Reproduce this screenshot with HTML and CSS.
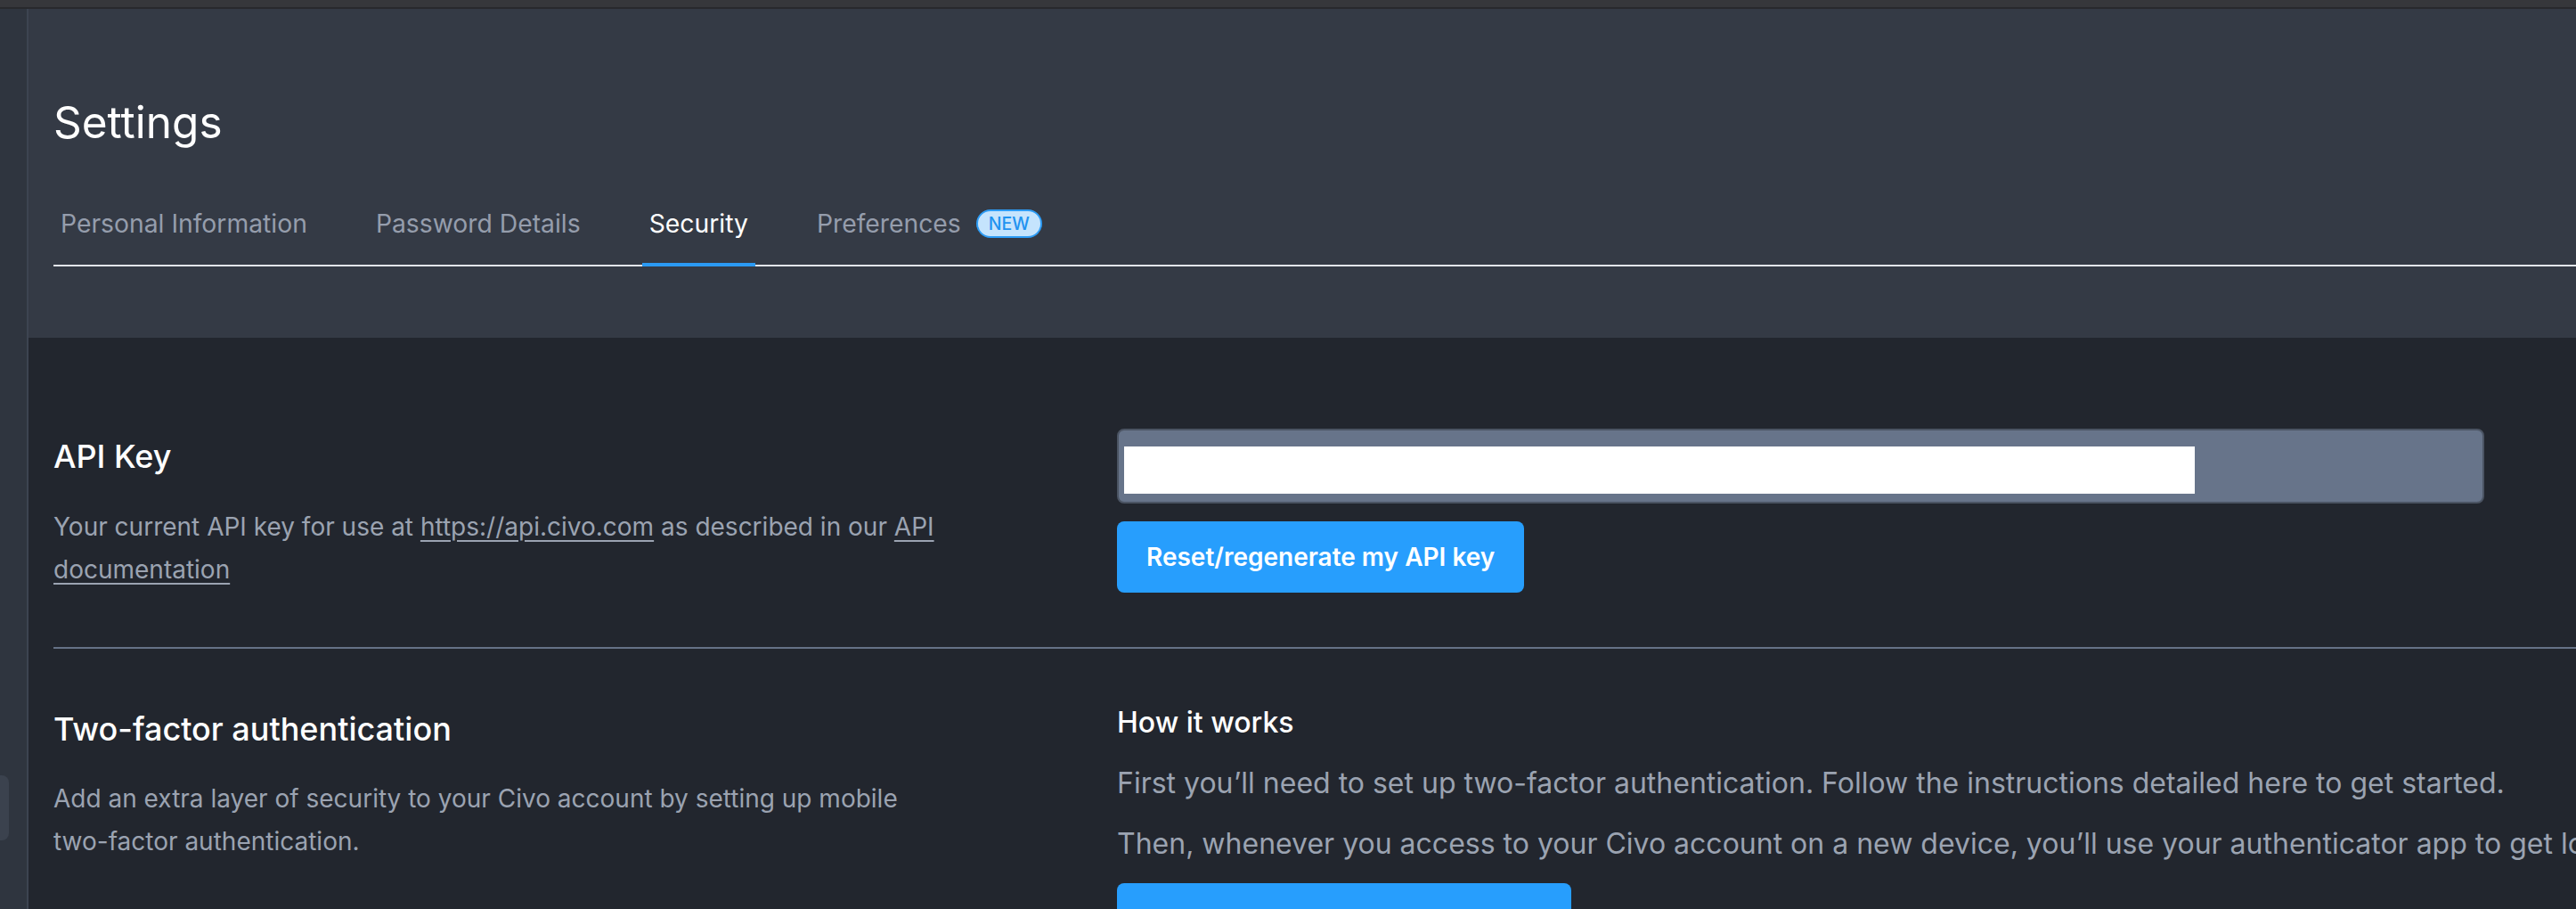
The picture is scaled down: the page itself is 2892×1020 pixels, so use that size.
FILE: index.html
```html
<!DOCTYPE html>
<html lang="en">
<head>
<meta charset="utf-8">
<title>Settings</title>
<link rel="stylesheet" href="styles.css">
</head>
<body>
<div class="topstrip"></div>
<div class="app">
  <aside class="sidebar">
    <div class="sidebar-tab"></div>
  </aside>
  <main class="main">
    <header class="page-header">
      <h1 class="page-title">Settings</h1>
      <nav class="tabs">
        <a class="tab">Personal Information</a>
        <a class="tab">Password Details</a>
        <a class="tab tab-active">Security</a>
        <a class="tab">Preferences <span class="badge">NEW</span></a>
      </nav>
    </header>
    <div class="content">
      <section class="row row-first">
        <div class="col-left">
          <h2 class="row-title">API Key</h2>
          <p class="row-desc">Your current API key for use at <a class="link">https://api.civo.com</a> as described in our <a class="link">API documentation</a></p>
        </div>
        <div class="col-right">
          <div class="key-field"><div class="key-mask"></div></div>
          <button class="btn">Reset/regenerate my API key</button>
        </div>
      </section>
      <section class="row row-second">
        <div class="col-left">
          <h2 class="row-title">Two-factor authentication</h2>
          <p class="row-desc">Add an extra layer of security to your Civo account by setting up mobile <span class="nowrap">two-factor</span> authentication.</p>
        </div>
        <div class="col-right">
          <h3 class="how-title">How it works</h3>
          <p class="how-text">First you’ll need to set up two-factor authentication. Follow the instructions detailed here to get started.</p>
          <p class="how-text">Then, whenever you access to your Civo account on a new device, you’ll use your authenticator app to get login codes.</p>
          <button class="btn btn-wide">Set up two-factor auth</button>
        </div>
      </section>
    </div>
  </main>
</div>
</body>
</html>
```

FILE: styles.css
```css
html, body {
  margin: 0;
  padding: 0;
  overflow: hidden;
  background: #22262e;
  font-family: "Inter", "Noto Sans", sans-serif;
}
body {
  width: 2892px;
  height: 1020px;
}
.topstrip {
  height: 8px;
  background: #36373b;
  border-bottom: 2px solid #28292d;
}
.app {
  display: flex;
  height: 1010px;
}
.sidebar {
  width: 30px;
  flex: 0 0 30px;
  background: #2f353f;
  border-right: 2px solid #3d4451;
  display: flex;
  flex-direction: column;
}
.sidebar-tab {
  margin-top: 860px;
  width: 10px;
  height: 73px;
  background: #3b424e;
  border-radius: 0 8px 8px 0;
}
.main {
  flex: 1 0 auto;
  width: 3400px;
  min-width: 0;
}
.page-header {
  background: #343a45;
  padding: 98px 0 80px 28px;
}
.page-title {
  margin: 0;
  font-size: 49.5px;
  line-height: 58px;
  font-weight: 400;
  color: #ffffff;
}
.tabs {
  margin-top: 65px;
  display: flex;
  gap: 61px;
  border-bottom: 2px solid #e2e5ea;
}
.tab {
  display: flex;
  align-items: center;
  padding: 0 8px 24px;
  margin-bottom: -2px;
  border-bottom: 4px solid transparent;
  font-size: 28.3px;
  line-height: 40px;
  color: #959dac;
  white-space: nowrap;
}
.tab-active {
  color: #ffffff;
  border-bottom-color: #2b9af3;
}
.badge {
  margin-left: 17px;
  height: 28px;
  padding: 0 12px;
  border: 2px solid #2d9cf5;
  border-radius: 16px;
  background: #c5e4fd;
  color: #1f93f0;
  font-size: 19.5px;
  font-weight: 500;
  line-height: 28px;
}
.content {
  padding-left: 28px;
}
.row {
  display: grid;
  grid-template-columns: 1194px 2000px;
  align-items: start;
}
.row-first {
  padding: 102px 0 61px;
  border-bottom: 2px solid #657186;
}
.row-second {
  padding-top: 59px;
}
.col-left {
  padding-right: 190px;
}
.row-title {
  margin: 7px 0 0;
  font-size: 36px;
  line-height: 48px;
  font-weight: 500;
  color: #ffffff;
}
.row-desc {
  margin: 31px 0 0;
  font-size: 28px;
  line-height: 48px;
  color: #9ba3b1;
}
.row-second .row-desc {
  margin-top: 30px;
}
.nowrap {
  white-space: nowrap;
}
.link {
  color: #9ba3b1;
  text-decoration: underline;
  text-underline-offset: 5px;
  text-decoration-thickness: 2px;
}
.col-right {
  display: flex;
  flex-direction: column;
  align-items: flex-start;
}
.key-field {
  box-sizing: border-box;
  width: 1535px;
  height: 84px;
  padding: 18px 0 0 6px;
  background: #67748a;
  border: 2px solid #4b5463;
  border-radius: 8px;
}
.key-mask {
  width: 1202px;
  height: 53px;
  background: #ffffff;
}
.btn {
  margin-top: 20px;
  height: 80px;
  padding: 0 33px;
  border: none;
  border-radius: 8px;
  background: #279efd;
  color: #ffffff;
  font-family: "Inter", "Noto Sans", sans-serif;
  font-size: 28px;
  font-weight: 600;
  line-height: 34px;
  white-space: nowrap;
}
.btn-wide {
  width: 510px;
  margin-top: 20px;
  padding-top: 8px;
}
.how-title {
  margin: 0;
  font-size: 32px;
  line-height: 48px;
  font-weight: 500;
  color: #ffffff;
}
.how-text {
  margin: 20px 0 0;
  font-size: 32px;
  line-height: 48px;
  color: #9ba3b1;
  white-space: nowrap;
}
```
